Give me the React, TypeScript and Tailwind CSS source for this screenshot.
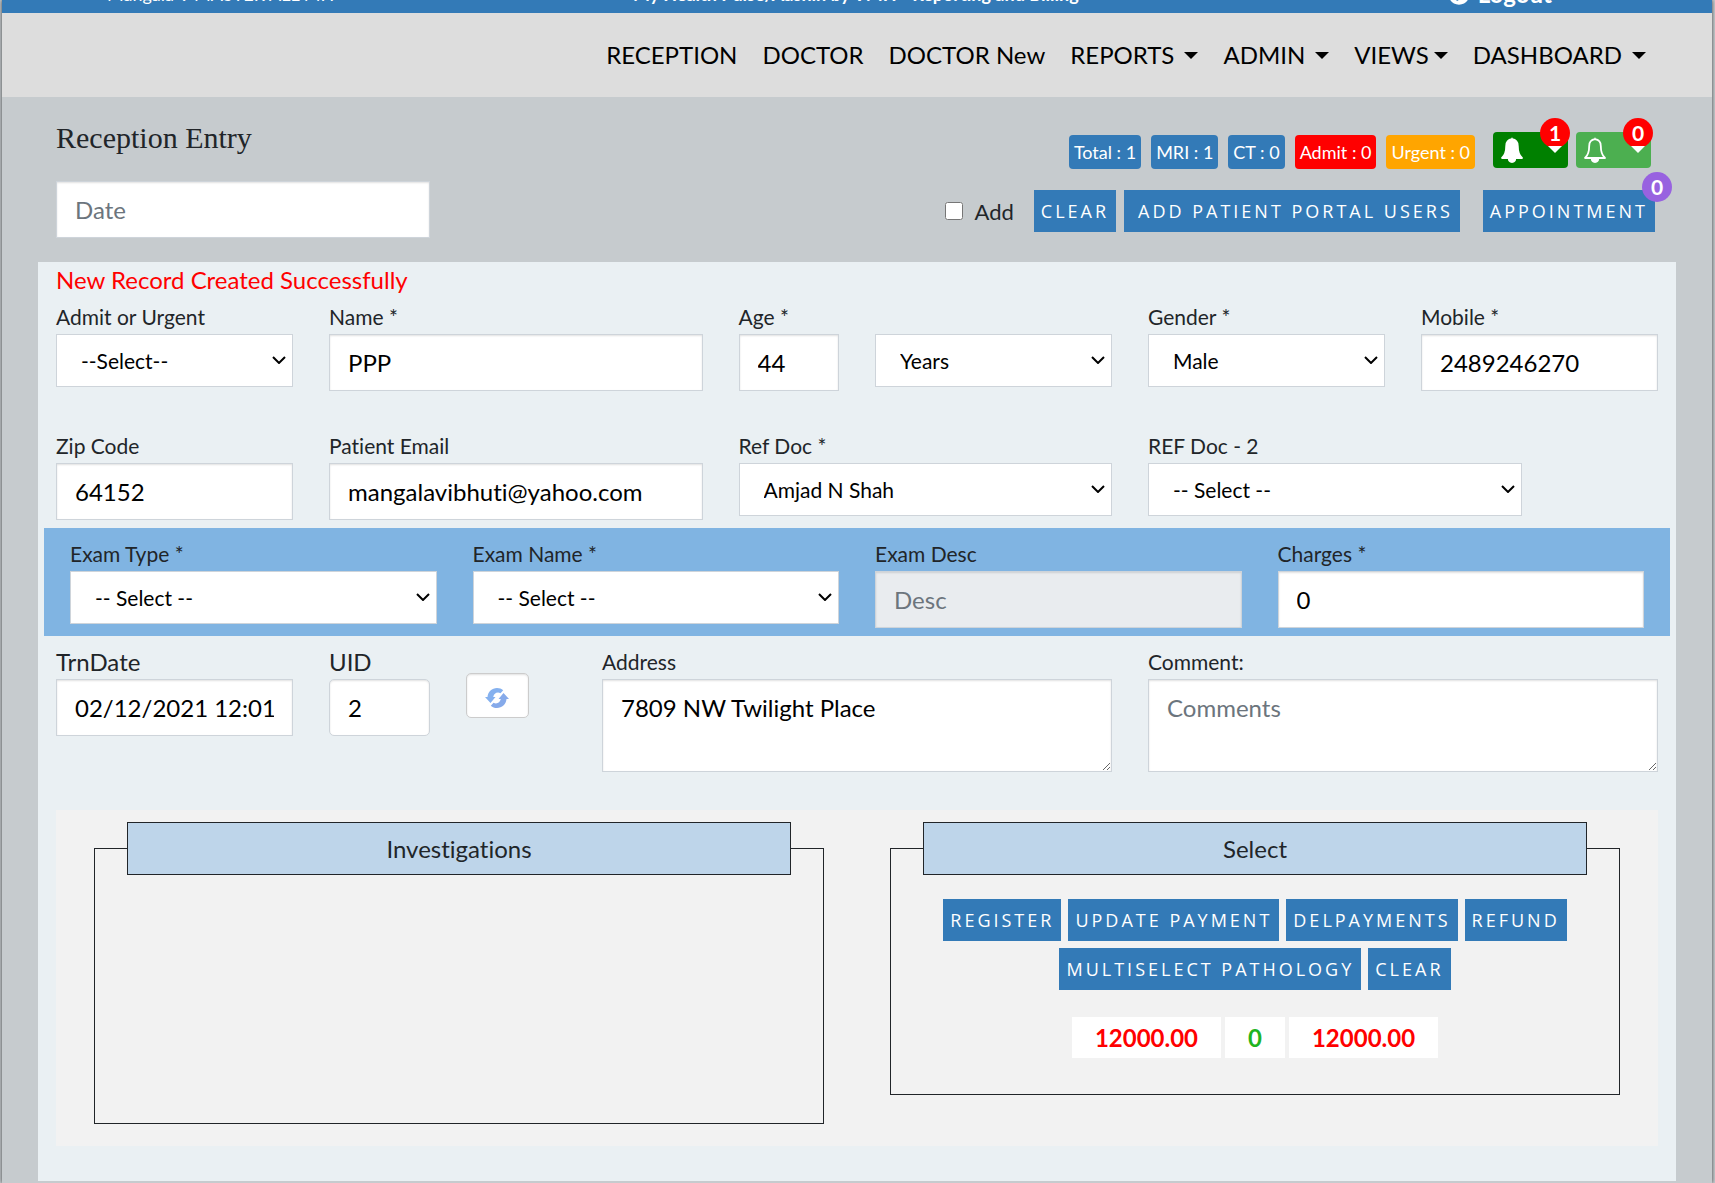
import { FaChevronCircleRight } from "react-icons/fa";

const labelClass = "block text-[21px] leading-[30px] mb-[2px] text-[#212529]";
const largeLabelClass = "block text-[24px] leading-[30px] mb-[2px] text-[#212529]";
const inputClass =
  "block w-full h-[57px] border border-[#ced4da] bg-white px-[18px] text-[24px] leading-8 text-black placeholder-[#6c757d] shadow-[inset_0_1px_2px_rgba(0,0,0,0.12)]";
const buttonClass =
  "h-[42px] bg-[#337ab7] px-[7px] font-['Open_Sans',sans-serif] text-[18px] tracking-[3px] uppercase text-white";

const navItems = [
  { label: "RECEPTION" },
  { label: "DOCTOR" },
  { label: "DOCTOR New" },
  { label: "REPORTS", caretGap: "gap-[10px]" },
  { label: "ADMIN", caretGap: "gap-[10px]" },
  { label: "VIEWS", caretGap: "gap-[5px]" },
  { label: "DASHBOARD", caretGap: "gap-[10px]" },
];

const stats = [
  { label: "Total : 1", color: "bg-[#337ab7]" },
  { label: "MRI : 1", color: "bg-[#337ab7]" },
  { label: "CT : 0", color: "bg-[#337ab7]" },
  { label: "Admit : 0", color: "bg-[#ff0000]" },
  { label: "Urgent : 0", color: "bg-[#ffa500]" },
];

function Caret({ className = "" }) {
  return (
    <svg viewBox="0 0 14 7" className={`h-[7px] w-[14px] fill-current ${className}`}>
      <path d="M0 0h14L7 7z" />
    </svg>
  );
}

function Field({ id, label, span = "", labelStyle = labelClass, children }) {
  return (
    <div className={span}>
      <label htmlFor={id} className={labelStyle}>{label}</label>
      {children}
    </div>
  );
}

function Select({ id, options, label }) {
  return (
    <div className="relative">
      <select
        id={id}
        aria-label={label}
        className="block w-full h-[53px] appearance-none border border-[#ced4da] bg-white pl-6 pr-8 text-[21px] text-black"
      >
        {options.map((option) => <option key={option}>{option}</option>)}
      </select>
      <svg viewBox="0 0 14 8" className="pointer-events-none absolute right-[7px] top-[22px] h-2 w-[14px] fill-none stroke-black stroke-2">
        <path d="M1 1l6 6 6-6" />
      </svg>
    </div>
  );
}

function BellIcon({ outline = false }) {
  return (
    <svg viewBox="0 0 24 26" className="h-[26px] w-6">
      <path
        d="M12 2.200C8.500 2.700 6.200 5 6.200 9C6.200 14.500 4.800 18.500 2 21H22C19.200 18.500 17.800 14.500 17.800 9C17.800 5 15.500 2.700 12 2.200Z"
        fill={outline ? "none" : "currentColor"}
        stroke="currentColor"
        strokeWidth="1.800"
        strokeLinejoin="round"
      />
      <path d="M12 0.600v2M8.300 22a3.700 3.400 0 0 0 7.400 0z" fill="currentColor" stroke="currentColor" />
    </svg>
  );
}

function BellButton({ outline = false, count, color, label }) {
  return (
    <button type="button" aria-label={label} className={`relative flex h-9 w-[75px] items-center rounded px-[7px] text-white ${color}`}>
      <BellIcon outline={outline} />
      <span className="absolute -right-[2px] -top-[14px] flex size-[30px] items-center justify-center rounded-full bg-[#ff0000] text-[21px] font-bold">{count}</span>
      <Caret className="absolute right-[6px] top-[14px]" />
    </button>
  );
}

function RefreshIcon() {
  return (
    <svg viewBox="0 0 24 20" className="h-5 w-6">
      <path d="M2.500 9C3 3.500 7 0 12 0C14.500 0 16.500 0.800 18.200 2.300L15.500 5.200C12 3.500 9 5.500 8.200 9H10.500L5.500 15L0 9Z" fill="#85b1ef" />
      <path d="M21.500 11C21 16.500 17 20 12 20C9.500 20 7.500 19.200 5.800 17.700L8.500 14.800C12 16.500 15 14.500 15.800 11H13.500L18.500 5L24 11Z" fill="#86aaea" />
    </svg>
  );
}

export default function App() {
  return (
    <div className="min-h-[1183px] bg-[#c6cbce] pl-[2px] pr-[3px] font-[Lato,sans-serif] text-[#212529] [font-variant-ligatures:none]">
      <div className="shadow-[0_0_4px_rgba(0,0,0,0.7)]">
        <header className="relative z-10">
          <div className="flex h-[13px] items-end overflow-hidden bg-[#337ab7] font-bold text-white">
            <div className="flex w-full items-center pb-[7px] pl-[105px]">
              <span className="w-[526px] text-[18px] leading-6 font-normal">Mangala V MASTER ALL MH</span>
              <span className="text-[18px] leading-6">My Health Pulse/Aashin by VMH - Reporting and Billing</span>
              <a href="#logout" className="ml-auto mr-[160px] flex items-center gap-2 text-[24px] leading-6">
                <FaChevronCircleRight className="size-[22px]" />
                Logout
              </a>
            </div>
          </div>
          <nav className="flex h-[84px] items-center justify-end gap-[25px] bg-[#ddd] pr-[66px]">
            {navItems.map((item) => (
              <a key={item.label} href="#menu" className={`flex items-center text-[24px] leading-9 text-black ${item.caretGap ?? ""}`}>
                {item.label}
                {item.caretGap && <Caret />}
              </a>
            ))}
          </nav>
        </header>

        <main className="bg-[#c6cbce] px-9 pb-[2px]">
          <div className="flex justify-between pl-[18px]">
            <div className="w-[374px] pt-[21px]">
              <h1 className="font-['Liberation_Serif',serif] text-[30px] leading-10">Reception Entry</h1>
              <input aria-label="Date" placeholder="Date" className={`${inputClass} mt-[23px]`} />
            </div>

            <div className="pt-[34px]">
              <div className="flex items-center justify-end pr-[25px]">
                <div className="mr-[18px] mt-1 flex gap-[10px]">
                  {stats.map((stat) => (
                    <span key={stat.label} className={`rounded px-[5px] text-[18px] leading-[34px] text-white ${stat.color}`}>{stat.label}</span>
                  ))}
                </div>
                <div className="flex gap-2">
                  <BellButton label="Alerts" count="1" color="bg-[#008000]" />
                  <BellButton label="Messages" outline count="0" color="bg-[#4caf50]" />
                </div>
              </div>
              <div className="mt-[21px] flex items-center justify-end pr-[21px]">
                <label className="mr-[20px] flex items-center gap-[12px] text-[22px]">
                  <input type="checkbox" className="size-[18px]" />
                  Add
                </label>
                <button type="button" className={buttonClass}>Clear</button>
                <button type="button" className={`${buttonClass} ml-2 pl-[14px]`}>Add Patient Portal Users</button>
                <button type="button" className={`${buttonClass} relative ml-[23px]`}>
                  Appointment
                  <span className="absolute -right-[17px] -top-[18px] flex size-[30px] items-center justify-center rounded-full bg-[#9862e0] font-[Lato,sans-serif] text-[21px] font-bold tracking-normal">0</span>
                </button>
              </div>
            </div>
          </div>

          <form className="mt-6 bg-[#eaf0f3] pb-[35px]">
            <p className="px-[18px] pt-[1px] text-[24px] leading-[34px] text-[#ff0000]">New Record Created Successfully</p>

            <div className="grid grid-cols-12 items-start gap-x-9 px-[18px] pt-[5px]">
              <Field id="admit" label="Admit or Urgent" span="col-span-2">
                <Select id="admit" options={["--Select--"]} />
              </Field>
              <Field id="name" label="Name *" span="col-span-3">
                <input id="name" defaultValue="PPP" className={inputClass} />
              </Field>
              <Field id="age" label="Age *">
                <input id="age" defaultValue="44" className={inputClass} />
              </Field>
              <div className="col-span-2 pt-8">
                <Select id="ageUnit" label="Age unit" options={["Years"]} />
              </div>
              <Field id="gender" label="Gender *" span="col-span-2">
                <Select id="gender" options={["Male"]} />
              </Field>
              <Field id="mobile" label="Mobile *" span="col-span-2">
                <input id="mobile" defaultValue="2489246270" className={inputClass} />
              </Field>
            </div>

            <div className="mt-10 grid grid-cols-12 items-start gap-x-9 px-[18px]">
              <Field id="zip" label="Zip Code" span="col-span-2">
                <input id="zip" defaultValue="64152" className={inputClass} />
              </Field>
              <Field id="email" label="Patient Email" span="col-span-3">
                <input id="email" defaultValue="mangalavibhuti@yahoo.com" className={inputClass} />
              </Field>
              <Field id="refDoc" label="Ref Doc *" span="col-span-3">
                <Select id="refDoc" options={["Amjad N Shah"]} />
              </Field>
              <Field id="refDoc2" label="REF Doc - 2" span="col-span-3">
                <Select id="refDoc2" options={["-- Select --"]} />
              </Field>
            </div>

            <div className="mx-[6px] mt-2 grid grid-cols-4 items-start gap-x-9 bg-[#80b4e2] px-[26px] pb-2 pt-[11px]">
              <Field id="examType" label="Exam Type *">
                <Select id="examType" options={["-- Select --"]} />
              </Field>
              <Field id="examName" label="Exam Name *">
                <Select id="examName" options={["-- Select --"]} />
              </Field>
              <Field id="examDesc" label="Exam Desc">
                <input id="examDesc" placeholder="Desc" readOnly className={inputClass.replace("bg-white", "bg-[#e9ecef]")} />
              </Field>
              <Field id="charges" label="Charges *">
                <input id="charges" defaultValue="0" className={inputClass} />
              </Field>
            </div>

            <div className="mt-[11px] grid grid-cols-12 items-start gap-x-9 px-[18px]">
              <Field id="trnDate" label="TrnDate" span="col-span-2" labelStyle={largeLabelClass}>
                <input id="trnDate" defaultValue="02/12/2021 12:01:20" className={inputClass} />
              </Field>
              <Field id="uid" label="UID" labelStyle={largeLabelClass}>
                <input id="uid" defaultValue="2" className={`${inputClass} rounded-[5px]`} />
              </Field>
              <div className="pt-[26px]">
                <button type="button" aria-label="Refresh" className="flex h-[45px] w-[63px] items-center justify-center rounded-[5px] border border-[#ccc] bg-white pt-1 shadow-[inset_0_1px_2px_rgba(0,0,0,0.12)]">
                  <RefreshIcon />
                </button>
              </div>
              <Field id="address" label="Address" span="col-span-4">
                <textarea id="address" defaultValue="7809 NW Twilight Place" className={`${inputClass} h-[93px] pt-3`} />
              </Field>
              <Field id="comment" label="Comment:" span="col-span-4">
                <textarea id="comment" placeholder="Comments" className={`${inputClass} h-[93px] pt-3`} />
              </Field>
            </div>

            <div className="mx-[18px] mt-[38px] grid grid-cols-2 items-start gap-x-[66px] bg-[#f2f2f2] px-[38px] pb-[22px] pt-3">
              <fieldset className="h-[302px] border border-[#212529] px-8">
                <legend className="w-full border border-[#212529] bg-[#bed5ea] text-center text-[24px] leading-[51px]">Investigations</legend>
              </fieldset>

              <fieldset className="border border-[#212529] px-8 pb-9">
                <legend className="w-full border border-[#212529] bg-[#bed5ea] text-center text-[24px] leading-[51px]">Select</legend>
                <div className="flex flex-wrap justify-center gap-x-[7px] gap-y-[7px] pt-6">
                  <button type="button" className={buttonClass}>Register</button>
                  <button type="button" className={buttonClass}>Update Payment</button>
                  <button type="button" className={buttonClass}>DelPayments</button>
                  <button type="button" className={buttonClass}>Refund</button>
                  <button type="button" className={buttonClass}>MultiSelect Pathology</button>
                  <button type="button" className={buttonClass}>Clear</button>
                </div>
                <div className="mt-[27px] flex justify-center gap-1 text-[24px] leading-[41px] font-bold">
                  <span className="bg-white px-[23px] text-[#ff0000]">12000.00</span>
                  <span className="bg-white px-[23px] text-[#1fb41f]">0</span>
                  <span className="bg-white px-[23px] text-[#ff0000]">12000.00</span>
                </div>
              </fieldset>
            </div>
          </form>
        </main>
      </div>
    </div>
  );
}
